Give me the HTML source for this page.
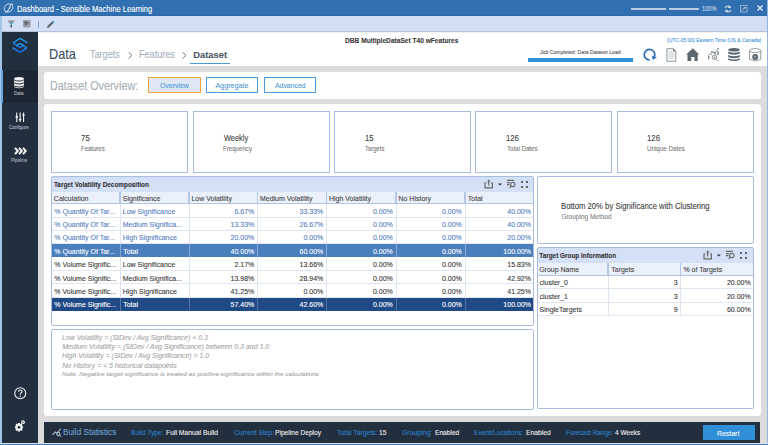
<!DOCTYPE html>
<html><head><meta charset="utf-8"><style>
*{margin:0;padding:0;box-sizing:border-box}
html,body{width:768px;height:445px;overflow:hidden;background:#dcdcdc;font-family:"Liberation Sans",sans-serif}
.a{position:absolute}
.t{position:absolute;line-height:1;white-space:nowrap;-webkit-text-stroke:0.1px currentColor}
svg{position:absolute;overflow:visible}
</style></head><body>

<div class="a" style="left:0px;top:0px;width:768.00px;height:16.00px;background:#3170b0"></div>
<div class="a" style="left:0px;top:16px;width:768.00px;height:16.00px;background:#d2dff5;border-bottom:1px solid #b5c2d8"></div>
<div class="a" style="left:0px;top:15px;width:768.00px;height:1.00px;background:#2d68a9"></div>
<div class="a" style="left:0px;top:16px;width:2.00px;height:429.00px;background:#a3c4e6"></div>
<div class="a" style="left:766.5px;top:0px;width:1.50px;height:445.00px;background:#93b4dc"></div>
<div class="a" style="left:0px;top:442.5px;width:768.00px;height:1.00px;background:#dfe3e8"></div>
<div class="a" style="left:0px;top:443.5px;width:768.00px;height:1.50px;background:#3d7cc4"></div>
<svg style="left:3px;top:3px" width="11" height="10" viewBox="0 0 11 10"><path d="M2 9 C5 9 6 6 6.5 5 C7 3.5 7.5 1 10 1" fill="none" stroke="#fff" stroke-width="1"/><ellipse cx="5.5" cy="5" rx="4.6" ry="3.8" transform="rotate(-35 5.5 5)" fill="none" stroke="#e6eef8" stroke-width="0.8"/></svg>
<div class="t" style="left:17.29px;top:5px;font-size:8.4px;color:#ffffff;font-weight:400;transform:scaleX(0.9049);transform-origin:0 0;">Dashboard - Sensible Machine Learning</div>
<div class="a" style="left:630.8px;top:8.4px;width:35.50px;height:1.20px;background:#bccbdd"></div>
<div class="a" style="left:668.5px;top:8.4px;width:30.50px;height:1.20px;background:#bccbdd"></div>
<div class="t" style="left:701.50px;top:6px;font-size:6.4px;color:#cfdcec;font-weight:400;transform:scaleX(0.8834);transform-origin:0 0;">100%</div>
<svg style="left:724px;top:4.5px" width="8" height="8" viewBox="0 0 8 8"><path d="M1 3.2 Q1.6 1 4 1 Q6 1 6.8 2.8 M7 4.8 Q6.4 7 4 7 Q2 7 1.2 5.2" fill="none" stroke="#d3deea" stroke-width="1.1"/><path d="M5.6 0.2 L6.2 3.2 L3.4 2.6Z M2.4 7.8 L1.8 4.8 L4.6 5.4Z" fill="#d3deea"/></svg>
<svg style="left:740px;top:4.5px" width="7.5" height="7.5" viewBox="0 0 7.5 7.5"><rect x="0.5" y="0.5" width="6.5" height="6.5" fill="none" stroke="#8eaed4" stroke-width="1"/><path d="M2 5.5 L5 2.5" stroke="#c5d5e8" stroke-width="1"/><path d="M3.4 2 L5.5 2 L5.5 4.1Z" fill="#c5d5e8"/></svg>
<svg style="left:756.8px;top:5.3px" width="6" height="6" viewBox="0 0 6 6"><path d="M0.5 0.5 L5.5 5.5 M5.5 0.5 L0.5 5.5" stroke="#e6edf5" stroke-width="1.2"/></svg>
<svg style="left:7px;top:20px" width="9" height="8" viewBox="0 0 9 8"><path d="M0.5 0.5 H8 L6 3 H2.5Z" fill="#8a9099"/><path d="M2.5 3 H6 L5 4.8 H3.5Z" fill="#4ab2ea"/><rect x="3.5" y="5" width="1.5" height="2.5" fill="#555"/></svg>
<svg style="left:23px;top:20px" width="8" height="8" viewBox="0 0 8 8"><rect x="0" y="0" width="7.5" height="7.5" rx="1" fill="#9aa1aa"/><path d="M2 5.5 L5.5 2 M2 3.5 L2 2 L3.5 2" stroke="#333" stroke-width="1" fill="none"/></svg>
<div class="a" style="left:37.8px;top:20.5px;width:1.00px;height:7.00px;background:#7ba6d8"></div>
<svg style="left:45.5px;top:19.5px" width="9" height="9" viewBox="0 0 9 9"><path d="M1 8 L1.5 6 L6.5 1 L8 2.5 L3 7.5Z" fill="#5a5f66"/><path d="M6 1.5 L7 0.5 L8.5 2 L7.5 3Z" fill="#4ab2ea"/></svg>
<div class="a" style="left:2px;top:32px;width:36.00px;height:410.50px;background:#212f3e"></div>
<div class="a" style="left:2px;top:70px;width:36.00px;height:33.00px;background:#1c2733"></div>
<div class="a" style="left:1.4px;top:70px;width:1.80px;height:33.00px;background:#6aa7e0"></div>
<svg style="left:11px;top:36px" width="18" height="19" viewBox="0 0 18 19"><defs><linearGradient id="lg" x1="0" y1="0" x2="0" y2="1"><stop offset="0" stop-color="#1fa3ea"/><stop offset="1" stop-color="#1868e8"/></linearGradient></defs>
<path d="M16.1 6.7 L9.9 2.8 Q9.1 2.3 8.3 2.8 L2.9 6.3 Q2 6.9 2.9 7.5 L8.3 11.1 Q9.1 11.6 9.9 11.1 L12.6 9.3" fill="none" stroke="url(#lg)" stroke-width="1.5" stroke-linecap="round" stroke-linejoin="round"/>
<path d="M2 12 L8.3 15.9 Q9.1 16.4 9.9 15.9 L15.1 12.5 Q15.9 12 15.1 11.5 L9.9 7.9 Q9.1 7.4 8.3 7.9 L5.6 9.7" fill="none" stroke="url(#lg)" stroke-width="1.5" stroke-linecap="round" stroke-linejoin="round"/></svg>
<svg style="left:14px;top:77px" width="10" height="12" viewBox="0 0 10 12"><g fill="#f2f2f2">
<ellipse cx="5" cy="1.8" rx="5" ry="1.8"/>
<path d="M0 3.2 Q5 5.6 10 3.2 V5.2 Q5 7.6 0 5.2Z"/>
<path d="M0 6.2 Q5 8.6 10 6.2 V8.2 Q5 10.6 0 8.2Z"/>
<path d="M0 9.2 Q5 11.6 10 9.2 V10 Q5 12.4 0 10Z"/></g></svg>
<div class="t" style="left:13.83px;top:92px;font-size:4.8px;color:#aab2bb;font-weight:400;transform:scaleX(0.9515);transform-origin:0 0;">Data</div>
<svg style="left:14.5px;top:111.5px" width="10" height="10" viewBox="0 0 10 10"><g fill="#f2f2f2">
<rect x="1.2" y="0.5" width="1.1" height="9.5"/><rect x="4.6" y="0.5" width="1.1" height="9.5"/><rect x="8" y="0.5" width="1.1" height="9.5"/>
<path d="M0.1 5 L1.75 3.6 L3.4 5 L1.75 6.4Z"/><path d="M3.5 7 H6.8 L5.15 9Z"/><path d="M6.9 3.6 H10.2 L8.55 1.6Z"/></g></svg>
<div class="t" style="left:9.27px;top:125px;font-size:5.0px;color:#b3bac2;font-weight:400;transform:scaleX(0.9083);transform-origin:0 0;">Configure</div>
<svg style="left:14px;top:146.5px" width="13" height="8" viewBox="0 0 13 8"><g fill="none" stroke="#f4f4f4" stroke-width="2" stroke-linejoin="miter">
<path d="M1 0.8 L3.8 4 L1 7.2"/><path d="M5 0.8 L7.8 4 L5 7.2"/><path d="M9 0.8 L11.8 4 L9 7.2"/></g></svg>
<div class="t" style="left:11.43px;top:158px;font-size:5.0px;color:#a9b1ba;font-weight:400;transform:scaleX(0.9181);transform-origin:0 0;">Pipeline</div>
<svg style="left:14px;top:387px" width="12.5" height="12.5" viewBox="0 0 12.5 12.5"><circle cx="6.25" cy="6.25" r="5.5" fill="none" stroke="#f2f2f2" stroke-width="1.1"/><path d="M4.5 4.8 Q4.5 3 6.25 3 Q8 3 8 4.6 Q8 5.6 6.8 6.2 Q6.2 6.6 6.2 7.6" fill="none" stroke="#f2f2f2" stroke-width="1.1"/><circle cx="6.2" cy="9.3" r="0.7" fill="#f2f2f2"/></svg>
<svg style="left:12.5px;top:419.5px" width="12" height="13" viewBox="0 0 12 13"><g fill="#f4f4f4">
<path d="M5 3 L7 3 L7.3 4.2 L8.4 3.6 L9.6 4.9 L8.9 6 L10 6.4 L10 8.2 L8.9 8.5 L9.5 9.6 L8.3 10.9 L7.2 10.3 L6.9 11.6 L5 11.6 L4.7 10.3 L3.6 10.9 L2.4 9.6 L3 8.5 L2 8.2 L2 6.4 L3.1 6 L2.4 4.9 L3.6 3.6 L4.7 4.2Z"/></g>
<circle cx="6" cy="7.3" r="1.4" fill="#212f3e"/><circle cx="10" cy="2.2" r="1.9" fill="#f4f4f4"/><rect x="9" y="1.9" width="2" height="0.7" fill="#212f3e"/></svg>
<div class="a" style="left:38px;top:32px;width:728.50px;height:33.50px;background:#ffffff"></div>
<div class="a" style="left:38px;top:32px;width:728.50px;height:1.00px;background:#f3f2ee"></div>
<div class="t" style="left:48.88px;top:47px;font-size:14.2px;color:#3b4c5e;font-weight:400;transform:scaleX(0.8992);transform-origin:0 0;">Data</div>
<div class="t" style="left:89.82px;top:50px;font-size:10.0px;color:#a7b2bd;font-weight:400;transform:scaleX(0.9073);transform-origin:0 0;">Targets</div>
<svg style="left:127.5px;top:52px" width="5" height="7" viewBox="0 0 5 7"><path d="M0.6 0.4 L4 3.4 L0.6 6.5" fill="none" stroke="#737b84" stroke-width="1"/></svg>
<div class="t" style="left:138.57px;top:50px;font-size:10.0px;color:#a7b2bd;font-weight:400;transform:scaleX(0.9097);transform-origin:0 0;">Features</div>
<svg style="left:182.2px;top:52px" width="5" height="7" viewBox="0 0 5 7"><path d="M0.6 0.4 L4 3.4 L0.6 6.5" fill="none" stroke="#737b84" stroke-width="1"/></svg>
<div class="t" style="left:193.24px;top:50px;font-size:9.4px;color:#4f5a66;font-weight:700;">Dataset</div>
<div class="a" style="left:190px;top:62.8px;width:40.40px;height:1.20px;background:#4a9ad8"></div>
<div class="t" style="left:345.10px;top:38px;font-size:6.6px;color:#3c3c3c;font-weight:700;">DBB MultipleDataSet T40 wFeatures</div>
<div class="t" style="left:666.70px;top:38px;font-size:5.2px;color:#4a98da;font-weight:400;transform:scaleX(0.9672);transform-origin:0 0;">(UTC-05:00) Eastern Time (US &amp; Canada)</div>
<div class="t" style="left:540.25px;top:50px;font-size:5.7px;color:#585858;font-weight:400;transform:scaleX(0.9080);transform-origin:0 0;">Job Completed: Data Dataset Load</div>
<div class="a" style="left:528.4px;top:57.5px;width:104.40px;height:4.10px;background:#2f8fd8"></div>
<svg style="left:642px;top:48px" width="15" height="14" viewBox="0 0 15 14"><path d="M7.8 12 A5.3 5.3 0 1 1 12.6 8.2" fill="none" stroke="#2b6bb5" stroke-width="1.7"/><path d="M9.8 7.6 L14.9 9.2 L10.9 11.9Z" fill="#2b6bb5"/></svg>
<svg style="left:665.5px;top:47.8px" width="11" height="14" viewBox="0 0 11 14"><path d="M0.9 0.7 H7.2 L9.8 3.3 V13.3 H0.9Z" fill="#fbfbfb" stroke="#8d949b" stroke-width="1"/><path d="M7 0.7 L9.8 3.5 H7Z" fill="#5c666f"/><g stroke="#c2c7cc" stroke-width="0.8"><path d="M2.5 3.5H6 M2.5 5.3H8.5 M2.5 7.1H8.5 M2.5 8.9H8 M2.5 10.7H7"/></g></svg>
<svg style="left:685.5px;top:48px" width="14" height="14" viewBox="0 0 14 14"><path d="M6.8 0.3 L13.2 6.6 H11.7 V13.1 H8.5 V9 H5.2 V13.1 H1.5 V6.6 H0.2Z" fill="#5a6670"/></svg>
<svg style="left:707.5px;top:48px" width="11" height="14" viewBox="0 0 11 14"><g fill="none" stroke="#767d85" stroke-width="0.8">
<path d="M0.6 7 L4 4 L7 5 L10 0.8"/><circle cx="6.5" cy="9.4" r="2.3"/><path d="M8.2 11.1 L10.2 13.2"/></g>
<g fill="#767d85"><circle cx="4" cy="4" r="0.9"/><circle cx="7" cy="5" r="0.9"/><circle cx="10" cy="0.8" r="0.8"/><circle cx="3.6" cy="6.6" r="0.7"/><circle cx="7.2" cy="6.2" r="0.6"/>
<rect x="0.1" y="7.6" width="1.3" height="3.6"/><rect x="9.3" y="3" width="1.3" height="4.2"/><circle cx="6.5" cy="9.4" r="1"/></g></svg>
<svg style="left:728.3px;top:48px" width="12" height="14" viewBox="0 0 12 14"><g fill="#59646d">
<ellipse cx="6" cy="1.8" rx="5.8" ry="1.8"/>
<path d="M0.2 3.5 Q6 6 11.8 3.5 V5.6 Q6 8.1 0.2 5.6Z"/>
<path d="M0.2 6.9 Q6 9.4 11.8 6.9 V9 Q6 11.5 0.2 9Z"/>
<path d="M0.2 10.3 Q6 12.8 11.8 10.3 V11.7 Q6 14.2 0.2 11.7Z"/></g></svg>
<svg style="left:749.3px;top:48px" width="13" height="14" viewBox="0 0 13 14"><g fill="none" stroke="#8b9198" stroke-width="0.9">
<ellipse cx="6.2" cy="2.6" rx="5.6" ry="2"/><path d="M0.6 2.6 V11.4 Q6.2 14.4 11.8 11.4 V2.6"/></g>
<circle cx="6.2" cy="8.9" r="3" fill="#5c666f"/><rect x="5" y="8.2" width="2.4" height="1.4" fill="#a4aab0"/></svg>
<div class="a" style="left:44px;top:71.5px;width:717.00px;height:27.20px;background:#fff;border-radius:3px"></div>
<div class="t" style="left:49.54px;top:80px;font-size:12.0px;color:#a6aeb6;font-weight:400;transform:scaleX(0.8998);transform-origin:0 0;">Dataset Overview:</div>
<div class="a" style="left:147.9px;top:76.5px;width:53.00px;height:16.50px;background:#dfe6f4;border:1.3px solid #f0a53a"></div>
<div class="t" style="left:159.52px;top:83px;font-size:7.1px;color:#4d9ad8;font-weight:400;transform:scaleX(0.9741);transform-origin:0 0;">Overview</div>
<div class="a" style="left:205.7px;top:77px;width:52.60px;height:15.90px;background:#fff;border:1px solid #4b9bdc"></div>
<div class="t" style="left:215.60px;top:83px;font-size:7.1px;color:#4d9ad8;font-weight:400;">Aggregate</div>
<div class="a" style="left:263.7px;top:77px;width:52.30px;height:15.90px;background:#fff;border:1px solid #4b9bdc"></div>
<div class="t" style="left:274.90px;top:83px;font-size:7.1px;color:#4d9ad8;font-weight:400;transform:scaleX(0.9686);transform-origin:0 0;">Advanced</div>
<div class="a" style="left:44px;top:104px;width:717.00px;height:312.30px;background:#fff;border-radius:3px"></div>
<div class="a" style="left:51px;top:110.8px;width:137.00px;height:62.20px;border:1px solid #a9bde2"></div>
<div class="t" style="left:81.40px;top:134px;font-size:9.2px;color:#404040;font-weight:400;transform:scaleX(0.8686);transform-origin:0 0;">75</div>
<div class="t" style="left:81.32px;top:146px;font-size:6.4px;color:#7a7a7a;font-weight:400;transform:scaleX(0.9368);transform-origin:0 0;">Features</div>
<div class="a" style="left:193px;top:110.8px;width:137.00px;height:62.20px;border:1px solid #a9bde2"></div>
<div class="t" style="left:223.80px;top:134px;font-size:9.2px;color:#404040;font-weight:400;transform:scaleX(0.8068);transform-origin:0 0;">Weekly</div>
<div class="t" style="left:223.31px;top:146px;font-size:6.4px;color:#7a7a7a;font-weight:400;transform:scaleX(0.9588);transform-origin:0 0;">Frequency</div>
<div class="a" style="left:334px;top:110.8px;width:137.00px;height:62.20px;border:1px solid #a9bde2"></div>
<div class="t" style="left:365.06px;top:134px;font-size:9.2px;color:#404040;font-weight:400;transform:scaleX(0.8318);transform-origin:0 0;">15</div>
<div class="t" style="left:365.48px;top:146px;font-size:6.4px;color:#7a7a7a;font-weight:400;transform:scaleX(0.9290);transform-origin:0 0;">Targets</div>
<div class="a" style="left:475px;top:110.8px;width:137.00px;height:62.20px;border:1px solid #a9bde2"></div>
<div class="t" style="left:506.26px;top:134px;font-size:9.2px;color:#404040;font-weight:400;transform:scaleX(0.8418);transform-origin:0 0;">126</div>
<div class="t" style="left:506.68px;top:146px;font-size:6.4px;color:#7a7a7a;font-weight:400;transform:scaleX(0.9528);transform-origin:0 0;">Total Dates</div>
<div class="a" style="left:616.5px;top:110.8px;width:137.00px;height:62.20px;border:1px solid #a9bde2"></div>
<div class="t" style="left:647.35px;top:134px;font-size:9.2px;color:#404040;font-weight:400;transform:scaleX(0.8488);transform-origin:0 0;">126</div>
<div class="t" style="left:647.46px;top:146px;font-size:6.4px;color:#7a7a7a;font-weight:400;transform:scaleX(0.9754);transform-origin:0 0;">Unique Dates</div>
<div class="a" style="left:51.2px;top:175.7px;width:483.00px;height:150.30px;border:1px solid #a9bde2;border-radius:2px"></div>
<div class="a" style="left:52.2px;top:176.7px;width:481.00px;height:14.90px;background:#d4e0f5"></div>
<div class="t" style="left:53.94px;top:182px;font-size:6.4px;color:#333;font-weight:700;">Target Volatility Decomposition</div>
<div class="a" style="left:52.2px;top:191.6px;width:481.00px;height:11.80px;background:#eaf0fa"></div>
<div class="a" style="left:52.2px;top:203.0px;width:481.00px;height:1.00px;background:#b4c6e6"></div>
<div class="t" style="left:53.85px;top:195px;font-size:7.0px;color:#444;font-weight:400;">Calculation</div>
<div class="t" style="left:122.72px;top:195px;font-size:7.0px;color:#444;font-weight:400;">Significance</div>
<div class="a" style="left:119px;top:191.6px;width:1.90px;height:11.80px;background:#b3c6e6"></div>
<div class="t" style="left:191.44px;top:195px;font-size:7.0px;color:#444;font-weight:400;">Low Volatility</div>
<div class="a" style="left:188px;top:191.6px;width:1.90px;height:11.80px;background:#b3c6e6"></div>
<div class="t" style="left:259.94px;top:195px;font-size:7.0px;color:#444;font-weight:400;">Medium Volatility</div>
<div class="a" style="left:256.5px;top:191.6px;width:1.90px;height:11.80px;background:#b3c6e6"></div>
<div class="t" style="left:328.94px;top:195px;font-size:7.0px;color:#444;font-weight:400;">High Volatility</div>
<div class="a" style="left:325.5px;top:191.6px;width:1.90px;height:11.80px;background:#b3c6e6"></div>
<div class="t" style="left:398.44px;top:195px;font-size:7.0px;color:#444;font-weight:400;">No History</div>
<div class="a" style="left:395px;top:191.6px;width:1.90px;height:11.80px;background:#b3c6e6"></div>
<div class="t" style="left:467.86px;top:195px;font-size:7.0px;color:#444;font-weight:400;">Total</div>
<div class="a" style="left:464px;top:191.6px;width:1.90px;height:11.80px;background:#b3c6e6"></div>
<div class="a" style="left:52.2px;top:216.57px;width:481.00px;height:1.00px;background:#dfe6f2"></div>
<div class="a" style="left:119.7px;top:203.8px;width:1.00px;height:13.57px;background:#dde5f2"></div>
<div class="a" style="left:188.7px;top:203.8px;width:1.00px;height:13.57px;background:#dde5f2"></div>
<div class="a" style="left:257.2px;top:203.8px;width:1.00px;height:13.57px;background:#dde5f2"></div>
<div class="a" style="left:326.2px;top:203.8px;width:1.00px;height:13.57px;background:#dde5f2"></div>
<div class="a" style="left:395.7px;top:203.8px;width:1.00px;height:13.57px;background:#dde5f2"></div>
<div class="a" style="left:464.7px;top:203.8px;width:1.00px;height:13.57px;background:#dde5f2"></div>
<div class="t" style="left:54.29px;top:208px;font-size:7.0px;color:#5680c0;font-weight:400;">% Quantity Of Tar...</div>
<div class="t" style="left:122.74px;top:208px;font-size:7.0px;color:#5680c0;font-weight:400;">Low Significance</div>
<div class="t" style="left:234.46px;top:208px;font-size:7.0px;color:#5680c0;font-weight:400;">6.67%</div>
<div class="t" style="left:299.56px;top:208px;font-size:7.0px;color:#5680c0;font-weight:400;">33.33%</div>
<div class="t" style="left:372.96px;top:208px;font-size:7.0px;color:#5680c0;font-weight:400;">0.00%</div>
<div class="t" style="left:441.96px;top:208px;font-size:7.0px;color:#5680c0;font-weight:400;">0.00%</div>
<div class="t" style="left:507.26px;top:208px;font-size:7.0px;color:#5680c0;font-weight:400;">40.00%</div>
<div class="a" style="left:52.2px;top:229.94px;width:481.00px;height:1.00px;background:#dfe6f2"></div>
<div class="a" style="left:119.7px;top:217.37px;width:1.00px;height:13.37px;background:#dde5f2"></div>
<div class="a" style="left:188.7px;top:217.37px;width:1.00px;height:13.37px;background:#dde5f2"></div>
<div class="a" style="left:257.2px;top:217.37px;width:1.00px;height:13.37px;background:#dde5f2"></div>
<div class="a" style="left:326.2px;top:217.37px;width:1.00px;height:13.37px;background:#dde5f2"></div>
<div class="a" style="left:395.7px;top:217.37px;width:1.00px;height:13.37px;background:#dde5f2"></div>
<div class="a" style="left:464.7px;top:217.37px;width:1.00px;height:13.37px;background:#dde5f2"></div>
<div class="t" style="left:54.29px;top:221px;font-size:7.0px;color:#5680c0;font-weight:400;">% Quantity Of Tar...</div>
<div class="t" style="left:122.74px;top:221px;font-size:7.0px;color:#5680c0;font-weight:400;">Medium Significa...</div>
<div class="t" style="left:230.56px;top:221px;font-size:7.0px;color:#5680c0;font-weight:400;">13.33%</div>
<div class="t" style="left:299.56px;top:221px;font-size:7.0px;color:#5680c0;font-weight:400;">26.67%</div>
<div class="t" style="left:372.96px;top:221px;font-size:7.0px;color:#5680c0;font-weight:400;">0.00%</div>
<div class="t" style="left:441.96px;top:221px;font-size:7.0px;color:#5680c0;font-weight:400;">0.00%</div>
<div class="t" style="left:507.26px;top:221px;font-size:7.0px;color:#5680c0;font-weight:400;">40.00%</div>
<div class="a" style="left:52.2px;top:243.31px;width:481.00px;height:1.00px;background:#dfe6f2"></div>
<div class="a" style="left:119.7px;top:230.74px;width:1.00px;height:13.37px;background:#dde5f2"></div>
<div class="a" style="left:188.7px;top:230.74px;width:1.00px;height:13.37px;background:#dde5f2"></div>
<div class="a" style="left:257.2px;top:230.74px;width:1.00px;height:13.37px;background:#dde5f2"></div>
<div class="a" style="left:326.2px;top:230.74px;width:1.00px;height:13.37px;background:#dde5f2"></div>
<div class="a" style="left:395.7px;top:230.74px;width:1.00px;height:13.37px;background:#dde5f2"></div>
<div class="a" style="left:464.7px;top:230.74px;width:1.00px;height:13.37px;background:#dde5f2"></div>
<div class="t" style="left:54.29px;top:234px;font-size:7.0px;color:#5680c0;font-weight:400;">% Quantity Of Tar...</div>
<div class="t" style="left:122.74px;top:234px;font-size:7.0px;color:#5680c0;font-weight:400;">High Significance</div>
<div class="t" style="left:230.56px;top:234px;font-size:7.0px;color:#5680c0;font-weight:400;">20.00%</div>
<div class="t" style="left:303.46px;top:234px;font-size:7.0px;color:#5680c0;font-weight:400;">0.00%</div>
<div class="t" style="left:372.96px;top:234px;font-size:7.0px;color:#5680c0;font-weight:400;">0.00%</div>
<div class="t" style="left:441.96px;top:234px;font-size:7.0px;color:#5680c0;font-weight:400;">0.00%</div>
<div class="t" style="left:507.26px;top:234px;font-size:7.0px;color:#5680c0;font-weight:400;">20.00%</div>
<div class="a" style="left:52.2px;top:244.11px;width:481.00px;height:13.37px;background:#4a7ebd"></div>
<div class="a" style="left:119.7px;top:244.11px;width:1.00px;height:13.37px;background:#86a9d8"></div>
<div class="a" style="left:188.7px;top:244.11px;width:1.00px;height:13.37px;background:#86a9d8"></div>
<div class="a" style="left:257.2px;top:244.11px;width:1.00px;height:13.37px;background:#86a9d8"></div>
<div class="a" style="left:326.2px;top:244.11px;width:1.00px;height:13.37px;background:#86a9d8"></div>
<div class="a" style="left:395.7px;top:244.11px;width:1.00px;height:13.37px;background:#86a9d8"></div>
<div class="a" style="left:464.7px;top:244.11px;width:1.00px;height:13.37px;background:#86a9d8"></div>
<div class="t" style="left:54.29px;top:248px;font-size:7.0px;color:#ffffff;font-weight:400;">% Quantity Of Tar...</div>
<div class="t" style="left:123.16px;top:248px;font-size:7.0px;color:#ffffff;font-weight:400;">Total</div>
<div class="t" style="left:230.56px;top:248px;font-size:7.0px;color:#ffffff;font-weight:400;">40.00%</div>
<div class="t" style="left:299.56px;top:248px;font-size:7.0px;color:#ffffff;font-weight:400;">60.00%</div>
<div class="t" style="left:372.96px;top:248px;font-size:7.0px;color:#ffffff;font-weight:400;">0.00%</div>
<div class="t" style="left:441.96px;top:248px;font-size:7.0px;color:#ffffff;font-weight:400;">0.00%</div>
<div class="t" style="left:503.37px;top:248px;font-size:7.0px;color:#ffffff;font-weight:400;">100.00%</div>
<div class="a" style="left:52.2px;top:270.05px;width:481.00px;height:1.00px;background:#dfe6f2"></div>
<div class="a" style="left:119.7px;top:257.48px;width:1.00px;height:13.37px;background:#dde5f2"></div>
<div class="a" style="left:188.7px;top:257.48px;width:1.00px;height:13.37px;background:#dde5f2"></div>
<div class="a" style="left:257.2px;top:257.48px;width:1.00px;height:13.37px;background:#dde5f2"></div>
<div class="a" style="left:326.2px;top:257.48px;width:1.00px;height:13.37px;background:#dde5f2"></div>
<div class="a" style="left:395.7px;top:257.48px;width:1.00px;height:13.37px;background:#dde5f2"></div>
<div class="a" style="left:464.7px;top:257.48px;width:1.00px;height:13.37px;background:#dde5f2"></div>
<div class="t" style="left:54.29px;top:261px;font-size:7.0px;color:#3a3a3a;font-weight:400;">% Volume Signific...</div>
<div class="t" style="left:122.74px;top:261px;font-size:7.0px;color:#3a3a3a;font-weight:400;">Low Significance</div>
<div class="t" style="left:234.46px;top:261px;font-size:7.0px;color:#3a3a3a;font-weight:400;">2.17%</div>
<div class="t" style="left:299.56px;top:261px;font-size:7.0px;color:#3a3a3a;font-weight:400;">13.66%</div>
<div class="t" style="left:372.96px;top:261px;font-size:7.0px;color:#3a3a3a;font-weight:400;">0.00%</div>
<div class="t" style="left:441.96px;top:261px;font-size:7.0px;color:#3a3a3a;font-weight:400;">0.00%</div>
<div class="t" style="left:507.26px;top:261px;font-size:7.0px;color:#3a3a3a;font-weight:400;">15.83%</div>
<div class="a" style="left:52.2px;top:283.42px;width:481.00px;height:1.00px;background:#dfe6f2"></div>
<div class="a" style="left:119.7px;top:270.85px;width:1.00px;height:13.37px;background:#dde5f2"></div>
<div class="a" style="left:188.7px;top:270.85px;width:1.00px;height:13.37px;background:#dde5f2"></div>
<div class="a" style="left:257.2px;top:270.85px;width:1.00px;height:13.37px;background:#dde5f2"></div>
<div class="a" style="left:326.2px;top:270.85px;width:1.00px;height:13.37px;background:#dde5f2"></div>
<div class="a" style="left:395.7px;top:270.85px;width:1.00px;height:13.37px;background:#dde5f2"></div>
<div class="a" style="left:464.7px;top:270.85px;width:1.00px;height:13.37px;background:#dde5f2"></div>
<div class="t" style="left:54.29px;top:275px;font-size:7.0px;color:#3a3a3a;font-weight:400;">% Volume Signific...</div>
<div class="t" style="left:122.74px;top:275px;font-size:7.0px;color:#3a3a3a;font-weight:400;">Medium Significa...</div>
<div class="t" style="left:230.56px;top:275px;font-size:7.0px;color:#3a3a3a;font-weight:400;">13.98%</div>
<div class="t" style="left:299.56px;top:275px;font-size:7.0px;color:#3a3a3a;font-weight:400;">28.94%</div>
<div class="t" style="left:372.96px;top:275px;font-size:7.0px;color:#3a3a3a;font-weight:400;">0.00%</div>
<div class="t" style="left:441.96px;top:275px;font-size:7.0px;color:#3a3a3a;font-weight:400;">0.00%</div>
<div class="t" style="left:507.26px;top:275px;font-size:7.0px;color:#3a3a3a;font-weight:400;">42.92%</div>
<div class="a" style="left:52.2px;top:296.78999999999996px;width:481.00px;height:1.00px;background:#dfe6f2"></div>
<div class="a" style="left:119.7px;top:284.22px;width:1.00px;height:13.37px;background:#dde5f2"></div>
<div class="a" style="left:188.7px;top:284.22px;width:1.00px;height:13.37px;background:#dde5f2"></div>
<div class="a" style="left:257.2px;top:284.22px;width:1.00px;height:13.37px;background:#dde5f2"></div>
<div class="a" style="left:326.2px;top:284.22px;width:1.00px;height:13.37px;background:#dde5f2"></div>
<div class="a" style="left:395.7px;top:284.22px;width:1.00px;height:13.37px;background:#dde5f2"></div>
<div class="a" style="left:464.7px;top:284.22px;width:1.00px;height:13.37px;background:#dde5f2"></div>
<div class="t" style="left:54.29px;top:288px;font-size:7.0px;color:#3a3a3a;font-weight:400;">% Volume Signific...</div>
<div class="t" style="left:122.74px;top:288px;font-size:7.0px;color:#3a3a3a;font-weight:400;">High Significance</div>
<div class="t" style="left:230.56px;top:288px;font-size:7.0px;color:#3a3a3a;font-weight:400;">41.25%</div>
<div class="t" style="left:303.46px;top:288px;font-size:7.0px;color:#3a3a3a;font-weight:400;">0.00%</div>
<div class="t" style="left:372.96px;top:288px;font-size:7.0px;color:#3a3a3a;font-weight:400;">0.00%</div>
<div class="t" style="left:441.96px;top:288px;font-size:7.0px;color:#3a3a3a;font-weight:400;">0.00%</div>
<div class="t" style="left:507.26px;top:288px;font-size:7.0px;color:#3a3a3a;font-weight:400;">41.25%</div>
<div class="a" style="left:52.2px;top:297.59px;width:481.00px;height:13.37px;background:#1f4a86"></div>
<div class="a" style="left:119.7px;top:297.59px;width:1.00px;height:13.37px;background:#5675a3"></div>
<div class="a" style="left:188.7px;top:297.59px;width:1.00px;height:13.37px;background:#5675a3"></div>
<div class="a" style="left:257.2px;top:297.59px;width:1.00px;height:13.37px;background:#5675a3"></div>
<div class="a" style="left:326.2px;top:297.59px;width:1.00px;height:13.37px;background:#5675a3"></div>
<div class="a" style="left:395.7px;top:297.59px;width:1.00px;height:13.37px;background:#5675a3"></div>
<div class="a" style="left:464.7px;top:297.59px;width:1.00px;height:13.37px;background:#5675a3"></div>
<div class="t" style="left:54.29px;top:301px;font-size:7.0px;color:#ffffff;font-weight:400;">% Volume Signific...</div>
<div class="t" style="left:123.16px;top:301px;font-size:7.0px;color:#ffffff;font-weight:400;">Total</div>
<div class="t" style="left:230.56px;top:301px;font-size:7.0px;color:#ffffff;font-weight:400;">57.40%</div>
<div class="t" style="left:299.56px;top:301px;font-size:7.0px;color:#ffffff;font-weight:400;">42.60%</div>
<div class="t" style="left:372.96px;top:301px;font-size:7.0px;color:#ffffff;font-weight:400;">0.00%</div>
<div class="t" style="left:441.96px;top:301px;font-size:7.0px;color:#ffffff;font-weight:400;">0.00%</div>
<div class="t" style="left:503.37px;top:301px;font-size:7.0px;color:#ffffff;font-weight:400;">100.00%</div>
<div class="a" style="left:51.2px;top:329px;width:483.00px;height:80.50px;border:1px solid #a9bde2;border-radius:2px"></div>
<div class="t" style="left:62.29px;top:334px;font-size:7.0px;color:#a6a6a6;font-weight:400;transform:scaleX(0.9904);transform-origin:0 0;font-style:italic">Low Volatility = (StDev / Avg Significance) &lt; 0.3</div>
<div class="t" style="left:62.29px;top:343px;font-size:7.0px;color:#a6a6a6;font-weight:400;font-style:italic">Medium Volatility = (StDev / Avg Significance) between 0.3 and 1.0</div>
<div class="t" style="left:62.29px;top:352px;font-size:7.0px;color:#a6a6a6;font-weight:400;transform:scaleX(0.9895);transform-origin:0 0;font-style:italic">High Volatility = (StDev / Avg Significance) &gt; 1.0</div>
<div class="t" style="left:62.29px;top:362px;font-size:7.0px;color:#a6a6a6;font-weight:400;font-style:italic">No History = &lt; 5 historical datapoints</div>
<div class="t" style="left:62.31px;top:372px;font-size:5.9px;color:#a6a6a6;font-weight:400;transform:scaleX(1.0948);transform-origin:0 0;font-style:italic">Note: Negative target significance is treated as positive significance within the calculations</div>
<div class="a" style="left:536.5px;top:176px;width:217.20px;height:68.00px;border:1px solid #a9bde2;border-radius:2px"></div>
<div class="t" style="left:561.08px;top:202px;font-size:8.4px;color:#404040;font-weight:400;transform:scaleX(0.9200);transform-origin:0 0;">Bottom 20% by Significance with Clustering</div>
<div class="t" style="left:561.38px;top:214px;font-size:6.5px;color:#858585;font-weight:400;">Grouping Method</div>
<div class="a" style="left:536.5px;top:246.9px;width:217.20px;height:162.60px;border:1px solid #a9bde2;border-radius:2px"></div>
<div class="a" style="left:537.5px;top:247.9px;width:215.20px;height:15.30px;background:#d4e0f5"></div>
<div class="t" style="left:539.24px;top:253px;font-size:6.4px;color:#333;font-weight:700;">Target Group Information</div>
<div class="a" style="left:537.5px;top:263.2px;width:215.20px;height:11.80px;background:#eaf0fa"></div>
<div class="a" style="left:537.5px;top:274.6px;width:215.20px;height:1.00px;background:#b4c6e6"></div>
<div class="t" style="left:539.15px;top:266px;font-size:7.0px;color:#444;font-weight:400;">Group Name</div>
<div class="t" style="left:611.26px;top:266px;font-size:7.0px;color:#444;font-weight:400;">Targets</div>
<div class="a" style="left:607.4px;top:263.2px;width:1.90px;height:11.80px;background:#b3c6e6"></div>
<div class="t" style="left:683.39px;top:266px;font-size:7.0px;color:#444;font-weight:400;">% of Targets</div>
<div class="a" style="left:679.6px;top:263.2px;width:1.90px;height:11.80px;background:#b3c6e6"></div>
<div class="a" style="left:537.5px;top:288.25px;width:215.20px;height:1.00px;background:#dfe6f2"></div>
<div class="a" style="left:608.1px;top:275.6px;width:1.00px;height:13.45px;background:#dde5f2"></div>
<div class="a" style="left:680.3000000000001px;top:275.6px;width:1.00px;height:13.45px;background:#dde5f2"></div>
<div class="t" style="left:539.52px;top:279px;font-size:7.0px;color:#3a3a3a;font-weight:400;">cluster_0</div>
<div class="t" style="left:673.76px;top:279px;font-size:7.0px;color:#3a3a3a;font-weight:400;">3</div>
<div class="t" style="left:726.96px;top:279px;font-size:7.0px;color:#3a3a3a;font-weight:400;">20.00%</div>
<div class="a" style="left:537.5px;top:301.7px;width:215.20px;height:1.00px;background:#dfe6f2"></div>
<div class="a" style="left:608.1px;top:289.05px;width:1.00px;height:13.45px;background:#dde5f2"></div>
<div class="a" style="left:680.3000000000001px;top:289.05px;width:1.00px;height:13.45px;background:#dde5f2"></div>
<div class="t" style="left:539.52px;top:293px;font-size:7.0px;color:#3a3a3a;font-weight:400;">cluster_1</div>
<div class="t" style="left:673.76px;top:293px;font-size:7.0px;color:#3a3a3a;font-weight:400;">3</div>
<div class="t" style="left:726.96px;top:293px;font-size:7.0px;color:#3a3a3a;font-weight:400;">20.00%</div>
<div class="a" style="left:537.5px;top:315.15px;width:215.20px;height:1.00px;background:#dfe6f2"></div>
<div class="a" style="left:608.1px;top:302.5px;width:1.00px;height:13.45px;background:#dde5f2"></div>
<div class="a" style="left:680.3000000000001px;top:302.5px;width:1.00px;height:13.45px;background:#dde5f2"></div>
<div class="t" style="left:539.52px;top:306px;font-size:7.0px;color:#3a3a3a;font-weight:400;">SingleTargets</div>
<div class="t" style="left:673.83px;top:306px;font-size:7.0px;color:#3a3a3a;font-weight:400;">9</div>
<div class="t" style="left:726.96px;top:306px;font-size:7.0px;color:#3a3a3a;font-weight:400;">60.00%</div>
<svg style="left:482px;top:176px" width="50" height="15" viewBox="0 0 50 15"><g fill="none" stroke="#6a6a6a" stroke-width="1.2">
<path d="M4.4 7 H3 V11.8 H10.4 V7 H9"/><path d="M6.7 4.6 V9.6"/></g>
<path d="M5 5.4 L6.7 3.3 L8.4 5.4Z" fill="#6a6a6a"/>
<path d="M15.8 7.5 H20 L17.9 9.4Z" fill="#333"/>
<g fill="none" stroke="#666" stroke-width="1.1"><path d="M25 4.4 H31.9 M25 6.6 H27.8 M25 8.6 H27.4"/><circle cx="30.8" cy="8.4" r="2.2"/><path d="M29.3 10 L27.6 11.8"/></g>
<g fill="#606060"><rect x="39" y="5" width="2" height="2"/><rect x="44" y="5" width="2" height="2"/><rect x="39" y="10" width="2" height="2"/><rect x="44" y="10" width="2" height="2"/></g></svg>
<svg style="left:701.3px;top:246.5px" width="50" height="15" viewBox="0 0 50 15"><g fill="none" stroke="#6a6a6a" stroke-width="1.2">
<path d="M4.4 7 H3 V11.8 H10.4 V7 H9"/><path d="M6.7 4.6 V9.6"/></g>
<path d="M5 5.4 L6.7 3.3 L8.4 5.4Z" fill="#6a6a6a"/>
<path d="M15.8 7.5 H20 L17.9 9.4Z" fill="#333"/>
<g fill="none" stroke="#666" stroke-width="1.1"><path d="M25 4.4 H31.9 M25 6.6 H27.8 M25 8.6 H27.4"/><circle cx="30.8" cy="8.4" r="2.2"/><path d="M29.3 10 L27.6 11.8"/></g>
<g fill="#606060"><rect x="39" y="5" width="2" height="2"/><rect x="44" y="5" width="2" height="2"/><rect x="39" y="10" width="2" height="2"/><rect x="44" y="10" width="2" height="2"/></g></svg>
<div class="a" style="left:43.6px;top:422px;width:716.90px;height:20.50px;background:#212f3e"></div>
<div class="a" style="left:51.5px;top:427px;width:10.50px;height:10.00px;background:#232a38"></div>
<svg style="left:52px;top:427.5px" width="10" height="9" viewBox="0 0 10 9"><g fill="none" stroke="#a3b8d6" stroke-width="1.1" stroke-linecap="round">
<path d="M0.8 6.5 L3 4.2 L5 5 L8.6 0.8"/><circle cx="6.3" cy="6" r="1.6"/><path d="M7.4 7.2 L8.8 8.4"/></g><circle cx="3" cy="4.2" r="0.8" fill="#a3b8d6"/></svg>
<div class="t" style="left:62.74px;top:428px;font-size:8.4px;color:#6d9fd2;font-weight:400;transform:scaleX(0.9777);transform-origin:0 0;">Build Statistics</div>
<div class="t" style="left:131.37px;top:429px;font-size:7.0px;color:#2f80c9;font-weight:400;transform:scaleX(0.9415);transform-origin:0 0;">Build Type:</div>
<div class="t" style="left:166.46px;top:429px;font-size:7.0px;color:#f0f0f0;font-weight:400;transform:scaleX(0.9689);transform-origin:0 0;">Full Manual Build</div>
<div class="t" style="left:233.56px;top:429px;font-size:7.0px;color:#2f80c9;font-weight:400;transform:scaleX(0.9664);transform-origin:0 0;">Current Step:</div>
<div class="t" style="left:275.37px;top:429px;font-size:7.0px;color:#f0f0f0;font-weight:400;transform:scaleX(0.9463);transform-origin:0 0;">Pipeline Deploy</div>
<div class="t" style="left:336.56px;top:429px;font-size:7.0px;color:#2f80c9;font-weight:400;transform:scaleX(0.9810);transform-origin:0 0;">Total Targets:</div>
<div class="t" style="left:379.44px;top:429px;font-size:7.0px;color:#f0f0f0;font-weight:400;transform:scaleX(0.9371);transform-origin:0 0;">15</div>
<div class="t" style="left:402.46px;top:429px;font-size:7.0px;color:#2f80c9;font-weight:400;transform:scaleX(0.9840);transform-origin:0 0;">Grouping:</div>
<div class="t" style="left:434.87px;top:429px;font-size:7.0px;color:#f0f0f0;font-weight:400;transform:scaleX(0.9460);transform-origin:0 0;">Enabled</div>
<div class="t" style="left:474.27px;top:429px;font-size:7.0px;color:#2f80c9;font-weight:400;transform:scaleX(0.9549);transform-origin:0 0;">Event/Locations:</div>
<div class="t" style="left:525.56px;top:429px;font-size:7.0px;color:#f0f0f0;font-weight:400;transform:scaleX(0.9621);transform-origin:0 0;">Enabled</div>
<div class="t" style="left:565.69px;top:429px;font-size:7.0px;color:#2f80c9;font-weight:400;transform:scaleX(0.9135);transform-origin:0 0;">Forecast Range:</div>
<div class="t" style="left:614.87px;top:429px;font-size:7.0px;color:#f0f0f0;font-weight:400;transform:scaleX(0.9344);transform-origin:0 0;">4 Weeks</div>
<div class="a" style="left:702.7px;top:424.6px;width:52.50px;height:15.70px;background:#2f8fd8"></div>
<div class="t" style="left:717.35px;top:430px;font-size:7.6px;color:#ffffff;font-weight:400;transform:scaleX(0.9120);transform-origin:0 0;">Restart</div>
</body></html>
